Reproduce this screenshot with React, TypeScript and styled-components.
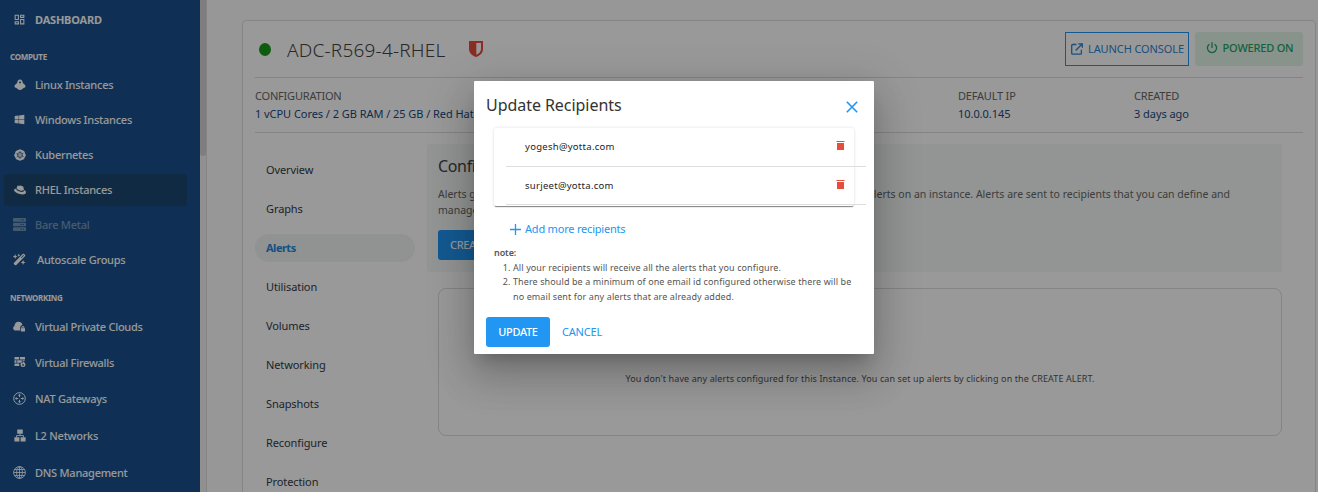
import React from 'react';
import styled, { createGlobalStyle, css } from 'styled-components';
import { MdOutlineDashboard } from 'react-icons/md';
import { FaWindows, FaRedhat } from 'react-icons/fa';
import { FaWandMagicSparkles } from 'react-icons/fa6';

const GlobalStyle = createGlobalStyle`
  * { box-sizing: border-box; }
  html, body { margin: 0; padding: 0; overflow: hidden; }
  body { font-family: "Noto Sans", "Open Sans", sans-serif; color: #333; background: #fcfcfc; }
  svg { display: block; flex: none; }
`;

const Page = styled.div`
  display: flex;
  width: 1318px;
  height: 492px;
  overflow: hidden;
  position: relative;
`;

const Sidebar = styled.nav`
  width: 200px;
  flex: none;
  background: #19508c;
  color: #fff;
  display: flex;
  flex-direction: column;
`;

const NavItem = styled.div<{ $h?: number; $active?: boolean; $dim?: boolean; $bold?: boolean; $gap?: number }>`
  display: flex;
  align-items: center;
  flex: none;
  gap: ${p => p.$gap ?? 8}px;
  height: ${p => p.$h ?? 35}px;
  margin: 0 13px 0 4px;
  padding-left: 8px;
  border-radius: 3px;
  font-size: 11px;
  font-weight: ${p => (p.$bold ? 700 : 500)};
  letter-spacing: ${p => (p.$bold ? '-0.2px' : '-0.25px')};
  white-space: nowrap;
  opacity: ${p => (p.$dim ? 0.4 : 1)};
  ${p => p.$active && css`
    height: 32px;
    margin-top: 2px;
    margin-bottom: 1px;
    padding-bottom: 1px;
    background: #1c4771;
  `}
`;

const NavIcon = styled.span`
  width: 15px;
  display: flex;
  justify-content: center;
`;

const NavHeading = styled.div<{ $top: number; $bottom: number }>`
  flex: none;
  margin: ${p => p.$top}px 0 ${p => p.$bottom}px 10px;
  height: 12px;
  line-height: 12px;
  font-size: 8px;
  font-weight: 700;
  letter-spacing: -0.3px;
`;

const ScrollTrack = styled.div`
  width: 7px;
  flex: none;
  background: #f1f1f1;
  border-right: 1px solid #dedede;
`;

const ScrollThumb = styled.div`
  width: 6px;
  height: 156px;
  background: #d2d2d2;
  border-radius: 0 0 3px 3px;
`;

const Main = styled.main`
  flex: 1;
  padding: 20px 2px 0 35px;
`;

const Card = styled.section`
  height: 500px;
  background: #fff;
  border: 1px solid #dedede;
  border-radius: 4px;
  padding: 0 12px;
`;

const CardHeader = styled.header`
  display: flex;
  align-items: center;
  height: 57px;
  border-bottom: 1px solid #dcdcdc;
`;

const StatusDot = styled.span`
  width: 12px;
  height: 13px;
  margin-left: 4px;
  border-radius: 50%;
  background: #189c18;
`;

const InstanceName = styled.h1`
  margin: 2px 23px 0 16px;
  font-size: 19px;
  font-weight: 300;
  letter-spacing: 0.2px;
  color: #444;
  white-space: nowrap;
`;

const HeaderActions = styled.div`
  display: flex;
  gap: 6px;
  margin-left: auto;
`;

const ActionButton = styled.div<{ $tone: 'outline' | 'success' }>`
  display: flex;
  align-items: center;
  justify-content: center;
  gap: 5px;
  height: 34px;
  font-size: 11px;
  white-space: nowrap;
  ${p => p.$tone === 'outline' ? css`
    width: 124px;
    border: 1px solid #2196f3;
    color: #2d84cf;
    letter-spacing: -0.1px;
    padding: 0 0 1px 1px;
  ` : css`
    width: 108px;
    background: #e3f5ea;
    border-radius: 3px;
    color: #1fa365;
    font-weight: 500;
    letter-spacing: -0.2px;
    padding: 0 0 3px 1px;
  `}
`;

const Facts = styled.div`
  display: grid;
  grid-template-columns: 703px 176px 1fr;
  height: 55px;
  padding-top: 9px;
  border-bottom: 1px solid #dcdcdc;
`;

const Fact = styled.div`
  font-size: 11px;
  line-height: 18px;
  white-space: nowrap;
`;

const FactLabel = styled.div`
  color: #666;
  letter-spacing: -0.2px;
`;

const FactValue = styled.div`
  color: #194a80;
  letter-spacing: -0.05px;
`;

const CardBody = styled.div`
  display: flex;
`;

const Tabs = styled.div`
  width: 160px;
  flex: none;
  padding-top: 23px;
  display: flex;
  flex-direction: column;
  gap: 11px;
`;

const Tab = styled.div<{ $active?: boolean }>`
  height: 28px;
  line-height: 28px;
  padding-left: 11px;
  border-radius: 14px;
  font-size: 11px;
  letter-spacing: -0.1px;
  color: #333b47;
  ${p => p.$active && css`
    background: #f1f5f4;
    color: #2187dc;
    font-weight: 700;
    letter-spacing: -0.5px;
  `}
`;

const Panel = styled.div`
  width: 855px;
  margin-left: 12px;
  padding-top: 11px;
`;

const Intro = styled.div`
  height: 128px;
  padding: 11px;
  background: #f4f8f6;
  border-radius: 3px;
`;

const IntroTitle = styled.h2`
  margin: 0;
  font-size: 16px;
  line-height: 22px;
  font-weight: 400;
  letter-spacing: -0.35px;
  color: #444;
`;

const IntroText = styled.p`
  margin: 9px 0 12px;
  font-size: 10.5px;
  line-height: 16px;
  color: #666;
  white-space: nowrap;
`;

const IntroLine = styled.span`
  display: flex;
  justify-content: space-between;
  width: 792px;
`;

const Button = styled.button<{ $flat?: boolean; $width?: number }>`
  width: ${p => p.$width ?? 64}px;
  height: 30px;
  padding: 0 0 2px;
  border: 0;
  border-radius: 3px;
  font-family: inherit;
  font-size: 11px;
  font-weight: ${p => (p.$flat ? 400 : 500)};
  letter-spacing: ${p => (p.$flat ? '-0.2px' : '-0.35px')};
  background: ${p => (p.$flat ? 'transparent' : '#2196f3')};
  color: ${p => (p.$flat ? '#2196f3' : '#fff')};
`;

const EmptyBox = styled.div`
  height: 148px;
  margin: 16px 0 0 11px;
  padding-top: 33px;
  display: flex;
  align-items: center;
  justify-content: center;
  border: 1px solid #dcdcdc;
  border-radius: 8px;
  font-size: 9px;
  letter-spacing: 0.11px;
  color: #555;
`;

const Backdrop = styled.div`
  position: absolute;
  inset: 0;
  background: rgba(0, 0, 0, 0.4);
`;

const Dialog = styled.div`
  position: absolute;
  left: 474px;
  top: 81px;
  width: 400px;
  height: 273px;
  padding: 12px;
  background: #fff;
  border-radius: 1px;
  box-shadow: 0 11px 15px -7px rgba(0, 0, 0, 0.2), 0 24px 38px 3px rgba(0, 0, 0, 0.14), 0 9px 46px 8px rgba(0, 0, 0, 0.12);
`;

const DialogHeader = styled.div`
  display: flex;
  align-items: center;
  justify-content: space-between;
  height: 24px;
  padding-right: 4px;

  svg { margin-top: 3px; }
`;

const DialogTitle = styled.h3`
  margin: 0;
  font-size: 16px;
  font-weight: 400;
  letter-spacing: -0.05px;
  color: #333;
`;

const Recipients = styled.div`
  width: 360px;
  height: 78px;
  margin: 11px 0 0 8px;
  padding-left: 12px;
  border-radius: 2px;
  box-shadow: 0 2px 1px -1px rgba(0, 0, 0, 0.4), 0 1px 1px rgba(0, 0, 0, 0.1), 0 0 3px rgba(0, 0, 0, 0.14);
`;

const Recipient = styled.div`
  display: flex;
  align-items: center;
  justify-content: space-between;
  width: 360px;
  height: 39px;
  padding: 0 21px 1px 19px;
  border-bottom: 1px solid #dedede;
  font-size: 9.5px;
  letter-spacing: 0.28px;
  color: #222;
  & + & { height: 38px; padding-bottom: 0; }

  svg { margin-bottom: 1px; }
`;

const AddMore = styled.div`
  display: flex;
  align-items: center;
  gap: 4px;
  height: 16px;
  margin: 14px 0 0 24px;
  font-size: 11px;
  letter-spacing: -0.2px;
  color: #2196f3;

  svg { margin-top: 2px; }
`;

const Note = styled.div`
  margin: 10px 0 0 8px;
  font-size: 9px;
  line-height: 14.5px;
  letter-spacing: 0.1px;
  color: #555;
`;

const NoteTitle = styled.div`
  font-weight: 600;
  letter-spacing: -0.1px;
`;

const NoteList = styled.ol`
  margin: 0;
  padding-left: 19px;
`;

const NoteItem = styled.li`
  white-space: nowrap;
`;

const DialogActions = styled.div`
  display: flex;
  margin-top: 13px;
`;

const LinuxIcon = () => (
  <svg width="12" height="12" viewBox="0 0 12 12" fill="currentColor">
    <path d="M6 .4C4.200.4 3.300 1.800 3.300 3.600 3.300 4.800.4 5.600.4 7.400c0 1 1.300 1.200 2 1.700.9.700 1.800 2 3.600 2s2.700-1.300 3.600-2c.7-.5 2-.7 2-1.700 0-1.800-2.900-2.600-2.900-3.800C8.700 1.800 7.800.4 6 .4Zm0 2c.7 0 1 .6 1 1.200 0 .5-.4.8-1 .8s-1-.3-1-.8c0-.6.3-1.200 1-1.200Z" fillRule="evenodd" />
  </svg>
);

const KubernetesIcon = () => (
  <svg width="12" height="12" viewBox="0 0 12 12">
    <path d="M6 .2 10.200 1.900 11.800 6.300 9.900 10.300 6 11.800 2.100 10.300.2 6.300 1.800 1.900Z" fill="currentColor" />
    <g fill="none" stroke="#19508c" strokeWidth=".6">
      <circle cx="6" cy="6" r="2.600" />
      <path d="M6 2v3M6 7v3M2.300 4.600l3 1M6.700 6.500l3 1.200M2.600 8l2.800-1.600M6.600 5.500l2.800-1.400" />
    </g>
  </svg>
);

const ServersIcon = () => (
  <svg width="13" height="13" viewBox="0 0 13 13">
    <g fill="currentColor">
      <rect width="13" height="3.700" rx=".9" />
      <rect y="4.650" width="13" height="3.700" rx=".9" />
      <rect y="9.300" width="13" height="3.700" rx=".9" />
    </g>
    <path d="M7.500 1.850h1.200m1 0h1.200M7.500 6.500h1.200m1 0h1.200M7.500 11.150h1.200m1 0h1.200" stroke="#19508c" />
  </svg>
);

const CloudLockIcon = () => (
  <svg width="13" height="11" viewBox="0 0 13 11" fill="currentColor">
    <path d="M7.200 9.600H2.600A2.500 2.500 0 0 1 1.500 4.900 3.900 3.900 0 0 1 5.500.8c2 0 3.500 1.200 4 3.100C8.100 4.200 7.200 5.300 7.200 6.700Z" />
    <path d="M7.900 7.300h.5v-.7a1.500 1.500 0 0 1 3 0v.7h.6v3.300H7.900Zm1.500 0h1v-.7a.5.5 0 0 0-1 0Z" fillRule="evenodd" />
  </svg>
);

const FirewallIcon = () => (
  <svg width="12" height="10" viewBox="0 0 12 10">
    <path d="M.5 0h4.700v2.600H.5ZM6 0h5v2.600H6ZM.5 3.300h2v2.500h-2ZM3.200 3.300h4.500v2.500H3.200ZM.5 6.500h4.700V9H.5ZM8.400 3.300h2.200v1H8.400Z" fill="currentColor" />
    <path d="M8.600 4.200c1.500.9 2.900 1.900 2.900 3.500a2.500 2.300 0 0 1-5 0c0-1 .5-1.700 1-2.200l.7.9c.5-.6.7-1.300.4-2.200Z" fill="currentColor" />
    <circle cx="9.100" cy="7.900" r=".9" fill="#19508c" />
  </svg>
);

const NatIcon = () => (
  <svg width="13" height="13" viewBox="0 0 13 13" fill="none" stroke="currentColor">
    <circle cx="6.500" cy="6.500" r="5.800" />
    <path d="M6.500 2.500v2.700M6.500 7.800v2.700M2.500 6.500h2.700M7.800 6.500h2.700" />
    <path d="m5.200 3.600 1.300-1.300 1.300 1.300M5.200 9.400l1.300 1.300 1.300-1.300M3.600 5.200 2.300 6.500l1.300 1.300M9.400 5.200l1.300 1.300-1.300 1.300" strokeWidth=".8" />
  </svg>
);

const LanIcon = () => (
  <svg width="12" height="13" viewBox="0 0 12 13">
    <path d="M3.200.5h5.600v4.300H3.200ZM.4 8.300h5v4.200h-5ZM6.600 8.300h5v4.200h-5Z" fill="currentColor" />
    <path d="M6 4.500v2.200M2.500 8.500V6.600h7v1.900" fill="none" stroke="currentColor" strokeWidth=".9" />
  </svg>
);

const GlobeIcon = () => (
  <svg width="13" height="13" viewBox="0 0 13 13" fill="none" stroke="currentColor" strokeWidth=".85">
    <circle cx="6.500" cy="6.500" r="5.900" />
    <ellipse cx="6.500" cy="6.500" rx="2.900" ry="5.900" />
    <path d="M6.500.6v11.800M.6 6.500h11.800M1.400 3.500h10.200M1.400 9.500h10.200" />
  </svg>
);

const ShieldIcon = () => (
  <svg width="14" height="16" viewBox="0 0 14 16">
    <path d="M0 0h14v8c0 4-3.200 6.900-7 8-3.800-1.100-7-4-7-8Z" fill="#e74c3c" />
    <path d="M7.300 2H12v6c0 2.600-2 4.700-4.700 5.700Z" fill="#fff" />
  </svg>
);

const LaunchIcon = () => (
  <svg width="12" height="12" viewBox="0 0 12 12" fill="none" stroke="currentColor" strokeWidth="1.300">
    <path d="M5.500 1.500H1.700q-1 0-1 1v7.700q0 1 1 1h7.700q1 0 1-1V6.800M7.300.8h4v4M11.100 1 4.600 7.500" />
  </svg>
);

const PowerIcon = () => (
  <svg width="12" height="12" viewBox="0 0 12 12" fill="none" stroke="currentColor" strokeWidth="1.300">
    <path d="M6 .3v5.800M3.400 2.200a4.600 4.600 0 1 0 5.200 0" />
  </svg>
);

const CloseIcon = () => (
  <svg width="12" height="12" viewBox="0 0 12 12" stroke="#2196f3" strokeWidth="1.600">
    <path d="m.8.8 10.400 10.400M11.200.8.8 11.200" />
  </svg>
);

const PlusIcon = () => (
  <svg width="11" height="11" viewBox="0 0 11 11" stroke="currentColor" strokeWidth="1.300">
    <path d="M5.500 0v11M0 5.500h11" />
  </svg>
);

const TrashIcon = () => (
  <svg width="9" height="10" viewBox="0 0 9 10" fill="#e74c3c">
    <path d="M.5 0h8v1h-8ZM1 2h7v7H1Z" />
  </svg>
);

const computeItems = [
  { label: 'Linux Instances', icon: <LinuxIcon /> },
  { label: 'Windows Instances', icon: <FaWindows size={11} /> },
  { label: 'Kubernetes', icon: <KubernetesIcon /> },
  { label: 'RHEL Instances', icon: <FaRedhat size={12} />, active: true },
  { label: 'Bare Metal', icon: <ServersIcon />, dim: true },
  { label: 'Autoscale Groups', icon: <FaWandMagicSparkles size={13} />, gap: 10 },
];

const networkItems = [
  { label: 'Virtual Private Clouds', icon: <CloudLockIcon />, height: 36 },
  { label: 'Virtual Firewalls', icon: <FirewallIcon />, height: 36 },
  { label: 'NAT Gateways', icon: <NatIcon />, height: 36 },
  { label: 'L2 Networks', icon: <LanIcon />, height: 38 },
  { label: 'DNS Management', icon: <GlobeIcon />, height: 36 },
];

const tabs = ['Overview', 'Graphs', 'Alerts', 'Utilisation', 'Volumes', 'Networking', 'Snapshots', 'Reconfigure', 'Protection'];

export default function App() {
  return (
    <>
      <GlobalStyle />
      <Page>
        <Sidebar>
          <NavItem $h={38} $bold><NavIcon><MdOutlineDashboard size={13} /></NavIcon>DASHBOARD</NavItem>
          <NavHeading $top={13} $bottom={4}>COMPUTE</NavHeading>
          {computeItems.map(i => (
            <NavItem key={i.label} $active={i.active} $dim={i.dim} $gap={i.gap}>
              <NavIcon>{i.icon}</NavIcon>{i.label}
            </NavItem>
          ))}
          <NavHeading $top={15} $bottom={4}>NETWORKING</NavHeading>
          {networkItems.map(i => (
            <NavItem key={i.label} $h={i.height}>
              <NavIcon>{i.icon}</NavIcon>{i.label}
            </NavItem>
          ))}
        </Sidebar>
        <ScrollTrack><ScrollThumb /></ScrollTrack>
        <Main>
          <Card>
            <CardHeader>
              <StatusDot />
              <InstanceName>ADC-R569-4-RHEL</InstanceName>
              <ShieldIcon />
              <HeaderActions>
                <ActionButton $tone="outline"><LaunchIcon />LAUNCH CONSOLE</ActionButton>
                <ActionButton $tone="success"><PowerIcon />POWERED ON</ActionButton>
              </HeaderActions>
            </CardHeader>
            <Facts>
              <Fact><FactLabel>CONFIGURATION</FactLabel><FactValue>1 vCPU Cores / 2 GB RAM / 25 GB / Red Hat</FactValue></Fact>
              <Fact><FactLabel>DEFAULT IP</FactLabel><FactValue>10.0.0.145</FactValue></Fact>
              <Fact><FactLabel>CREATED</FactLabel><FactValue>3 days ago</FactValue></Fact>
            </Facts>
            <CardBody>
              <Tabs>
                {tabs.map(t => <Tab key={t} $active={t === 'Alerts'}>{t}</Tab>)}
              </Tabs>
              <Panel>
                <Intro>
                  <IntroTitle>Configure Alerts</IntroTitle>
                  <IntroText>
                    <IntroLine><span>Alerts give you</span><span>alerts on an instance. Alerts are sent to recipients that you can define and</span></IntroLine>
                    <IntroLine>manage.</IntroLine>
                  </IntroText>
                  <Button $width={94}>CREATE ALERT</Button>
                </Intro>
                <EmptyBox>You don't have any alerts configured for this Instance. You can set up alerts by clicking on the CREATE ALERT.</EmptyBox>
              </Panel>
            </CardBody>
          </Card>
        </Main>
        <Backdrop />
        <Dialog>
          <DialogHeader><DialogTitle>Update Recipients</DialogTitle><CloseIcon /></DialogHeader>
          <Recipients>
            <Recipient>yogesh@yotta.com<TrashIcon /></Recipient>
            <Recipient>surjeet@yotta.com<TrashIcon /></Recipient>
          </Recipients>
          <AddMore><PlusIcon />Add more recipients</AddMore>
          <Note>
            <NoteTitle>note:</NoteTitle>
            <NoteList>
              <NoteItem>All your recipients will receive all the alerts that you configure.</NoteItem>
              <NoteItem>There should be a minimum of one email id configured otherwise there will be<br />no email sent for any alerts that are already added.</NoteItem>
            </NoteList>
          </Note>
          <DialogActions><Button>UPDATE</Button><Button $flat>CANCEL</Button></DialogActions>
        </Dialog>
      </Page>
    </>
  );
}
